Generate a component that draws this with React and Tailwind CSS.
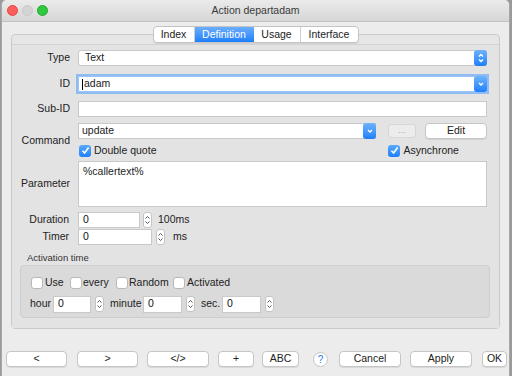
import React from "react";

const font = { fontFamily: '"Liberation Sans", Arial, sans-serif' };

function Stepper({ cls = "" }) {
  return (
    <div className={"flex h-[16px] w-[9px] flex-col items-center justify-center rounded-[3px] border border-[#c4c4c4] bg-white " + cls}>
      <svg width="7" height="12" viewBox="0 0 7 12">
        <path d="M1.5 4.5 L3.5 2.5 L5.5 4.5" fill="none" stroke="#555" strokeWidth="1" />
        <path d="M1.5 7.5 L3.5 9.5 L5.5 7.5" fill="none" stroke="#555" strokeWidth="1" />
      </svg>
    </div>
  );
}

function BlueUpDown() {
  return (
    <div className="flex h-[16px] w-[13px] items-center justify-center rounded-[3px] bg-gradient-to-b from-[#6db3fb] to-[#1b7ffa]">
      <svg width="8" height="12" viewBox="0 0 8 12">
        <path d="M2 4.5 L4 2.5 L6 4.5" fill="none" stroke="#fff" strokeWidth="1.3" />
        <path d="M2 7.5 L4 9.5 L6 7.5" fill="none" stroke="#fff" strokeWidth="1.3" />
      </svg>
    </div>
  );
}

function BlueDown({ h = "h-[16px]" }) {
  return (
    <div className={"flex w-[13px] items-center justify-center rounded-[3px] bg-gradient-to-b from-[#6db3fb] to-[#1b7ffa] " + h}>
      <svg width="8" height="8" viewBox="0 0 8 8">
        <path d="M2 3 L4 5 L6 3" fill="none" stroke="#fff" strokeWidth="1.3" />
      </svg>
    </div>
  );
}

function Check({ checked }) {
  if (checked) {
    return (
      <div className="flex h-[12px] w-[12px] shrink-0 items-center justify-center rounded-[3px] bg-gradient-to-b from-[#5aa9fb] to-[#1a7ffa]">
        <svg width="9" height="9" viewBox="0 0 9 9">
          <path d="M1.5 4.8 L3.6 7 L7.6 1.6" fill="none" stroke="#fff" strokeWidth="1.6" />
        </svg>
      </div>
    );
  }
  return <div className="h-[12px] w-[12px] shrink-0 rounded-[3px] border border-[#b9b9b9] bg-white" />;
}

function Btn({ w, children, cls = "" }) {
  return (
    <div
      className={"flex h-[16px] items-center justify-center rounded-[4px] border border-[#c6c6c6] bg-white text-[10.5px] text-[#222] shadow-[0_1px_0_rgba(0,0,0,0.08)] " + w + " " + cls}
    >
      {children}
    </div>
  );
}

function Field({ w, value = "", cls = "" }) {
  return (
    <div className={"flex h-[16px] items-center border border-[#c9c9c9] bg-white pl-[4px] text-[10.5px] text-[#111] " + w + " " + cls}>
      {value}
    </div>
  );
}

export default function App() {
  return (
    <div style={font} className="flex h-[376px] w-[512px] bg-[#9a9a9a] pl-[2px] pr-[3px]">
      <div className="flex w-[507px] flex-col overflow-hidden rounded-t-[5px] bg-[#ececec] shadow-[0_0_0_1px_#a8a8a8]">
        {/* title bar */}
        <div className="relative flex h-[22px] shrink-0 items-center justify-center border-b border-[#c2c2c2] bg-gradient-to-b from-[#ebebeb] to-[#d6d6d6]">
          <div className="absolute left-[5px] top-[5px] flex gap-[4px]">
            <div className="h-[11px] w-[11px] rounded-full border border-[#e2463f] bg-[#fc605c]" />
            <div className="h-[11px] w-[11px] rounded-full border border-[#c8c8c8] bg-[#d4d4d4]" />
            <div className="h-[11px] w-[11px] rounded-full border border-[#1aab2a] bg-[#2fc840]" />
          </div>
          <span className="text-[10.5px] text-[#3a3a3a]">Action departadam</span>
        </div>

        {/* tabs */}
        <div className="relative z-10 mt-[4px] flex justify-center">
          <div className="flex h-[17px] overflow-hidden rounded-[4px] border border-[#c4c4c4] bg-white text-[10.5px] text-[#222] shadow-[0_1px_0_rgba(0,0,0,0.08)]">
            <div className="flex w-[41px] items-center justify-center border-r border-[#d0d0d0]">Index</div>
            <div className="flex w-[59px] items-center justify-center bg-gradient-to-b from-[#6aaefc] to-[#1a7ffa] text-white">Definition</div>
            <div className="flex w-[47px] items-center justify-center border-r border-[#d0d0d0]">Usage</div>
            <div className="flex w-[57px] items-center justify-center">Interface</div>
          </div>
        </div>

        {/* panel */}
        <div className="mx-[9px] -mt-[9px] flex h-[295px] flex-col rounded-[4px] border border-[#cacaca] bg-[#e6e6e6] pt-[9px]">
          <div className="flex flex-1 flex-col border-t border-[#d3d3d3] bg-[#e3e3e3] pr-[12px] text-[10.5px] text-[#222]">
            {/* Type */}
            <div className="mt-[5px] flex items-center">
              <div className="w-[58px] text-right">Type</div>
              <div className="ml-[8px] flex h-[16px] flex-1 items-center justify-between rounded-[3px] border border-[#c9c9c9] bg-white pl-[6px]">
                <span>Text</span>
                <div className="-mr-px"><BlueUpDown /></div>
              </div>
            </div>
            {/* ID */}
            <div className="mt-[10px] flex items-center">
              <div className="w-[58px] text-right">ID</div>
              <div className="ml-[8px] flex h-[16px] flex-1 items-center justify-between border border-[#9cc3f3] bg-white pl-[3px] shadow-[0_0_0_2px_#8fbcf4]">
                <span className="flex items-center"><span className="mr-[1px] h-[11px] w-px bg-black" />adam</span>
                <div className="-mr-px"><BlueDown /></div>
              </div>
            </div>
            {/* Sub-ID */}
            <div className="mt-[9px] flex items-center">
              <div className="w-[58px] text-right">Sub-ID</div>
              <Field w="flex-1" cls="ml-[8px]" />
            </div>
            {/* Command */}
            <div className="mt-[6px] flex items-center">
              <div className="w-[58px] text-right">Command</div>
              <div className="ml-[8px] flex flex-1 flex-col">
                <div className="flex items-center">
                  <div className="flex h-[16px] w-[298px] items-center justify-between border border-[#c9c9c9] bg-white pl-[3px]">
                    <span>update</span>
                    <div className="-mr-px"><BlueDown /></div>
                  </div>
                  <div className="ml-[12px] flex h-[14px] w-[28px] items-center justify-center rounded-[3px] border border-[#d6d6d6] bg-[#ececec] text-[9px] text-[#aaa]">...</div>
                  <Btn w="w-[62px]" cls="ml-[9px] h-[15px]">Edit</Btn>
                </div>
                <div className="mt-[4px] flex items-center">
                  <div className="ml-[1px]"><Check checked /></div>
                  <span className="ml-[3px]">Double quote</span>
                  <div className="ml-[232px]"><Check checked /></div>
                  <span className="ml-[3px]">Asynchrone</span>
                </div>
              </div>
            </div>
            {/* Parameter */}
            <div className="mt-[2px] flex items-center">
              <div className="w-[58px] text-right">Parameter</div>
              <div className="ml-[8px] h-[46px] flex-1 border border-[#c9c9c9] bg-white pl-[4px] pt-[2px]">%callertext%</div>
            </div>
            {/* Duration */}
            <div className="mt-[5px] flex items-center">
              <div className="w-[57px] text-right">Duration</div>
              <Field w="w-[62px]" value="0" cls="ml-[9px]" />
              <Stepper cls="ml-[3px]" />
              <span className="ml-[6px]">100ms</span>
            </div>
            {/* Timer */}
            <div className="mt-[1px] flex items-center">
              <div className="w-[57px] text-right">Timer</div>
              <Field w="w-[74px]" value="0" cls="ml-[9px]" />
              <Stepper cls="ml-[4px]" />
              <span className="ml-[8px]">ms</span>
            </div>
            {/* Activation time */}
            <div className="ml-[15px] mt-[6px] text-[9.5px] text-[#333]">Activation time</div>
            <div className="ml-[8px] mr-[-3px] flex h-[53px] flex-col rounded-[4px] border border-[#cdcdcd] bg-[#dadada] pl-[10px]">
              <div className="mt-[9px] flex items-center">
                <div className="flex w-[39px] items-center">
                  <Check />
                  <span className="ml-[2px]">Use</span>
                </div>
                <div className="flex w-[46px] items-center">
                  <Check />
                  <span className="ml-[1px]">every</span>
                </div>
                <div className="flex w-[57px] items-center">
                  <Check />
                  <span className="ml-[1px]">Random</span>
                </div>
                <div className="flex items-center">
                  <Check />
                  <span className="ml-[2px]">Activated</span>
                </div>
              </div>
              <div className="mt-[5px] flex items-center">
                <span className="w-[22px] -ml-px">hour</span>
                <Field w="w-[38px]" value="0" cls="ml-[1px] h-[17px]" />
                <Stepper cls="ml-[4px]" />
                <span className="ml-[6px] w-[32px]">minute</span>
                <Field w="w-[39px]" value="0" cls="ml-[1px] h-[17px]" />
                <Stepper cls="ml-[4px]" />
                <span className="ml-[6px] w-[20px]">sec.</span>
                <Field w="w-[39px]" value="0" cls="ml-[1px] h-[17px]" />
                <Stepper cls="ml-[4px]" />
              </div>
            </div>
          </div>
        </div>

        {/* bottom buttons */}
        <div className="mt-[22px] flex items-center pl-[4px]">
          <Btn w="w-[61px]">&lt;</Btn>
          <Btn w="w-[61px]" cls="ml-[10px]">&gt;</Btn>
          <Btn w="w-[62px]" cls="ml-[9px]">&lt;/&gt;</Btn>
          <Btn w="w-[36px]" cls="ml-[9px]">+</Btn>
          <Btn w="w-[37px]" cls="ml-[8px]">ABC</Btn>
          <div className="ml-[14px] flex h-[15px] w-[15px] items-center justify-center rounded-full border border-[#c6c6c6] bg-white text-[10px] text-[#2a7cf6]">?</div>
          <Btn w="w-[62px]" cls="ml-[11px]">Cancel</Btn>
          <Btn w="w-[62px]" cls="ml-[9px]">Apply</Btn>
          <Btn w="w-[25px]" cls="ml-[10px]">OK</Btn>
        </div>
      </div>
    </div>
  );
}
